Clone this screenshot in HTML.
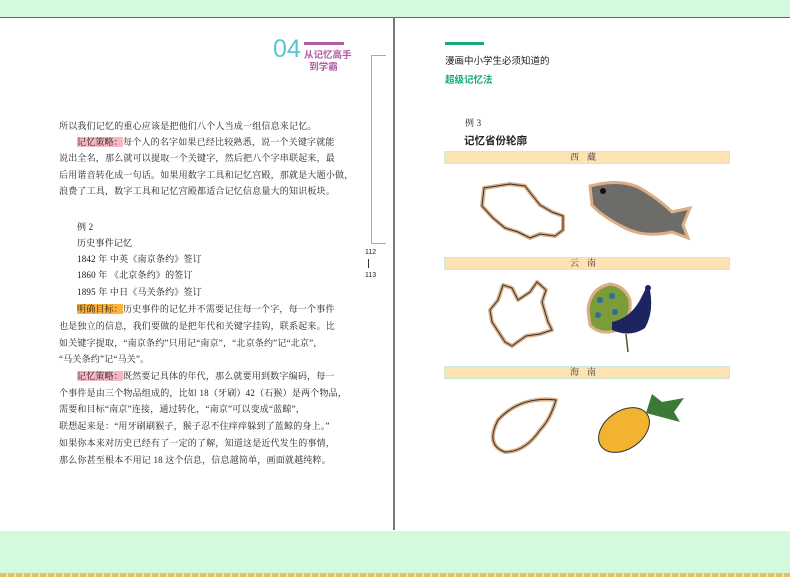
<!DOCTYPE html>
<html><head><meta charset="utf-8"><style>
body{margin:0;width:790px;height:577px;overflow:hidden;background:#d3fadd;position:relative;font-family:"Liberation Serif","Noto Serif CJK SC",serif;color:#222}
.a{position:absolute;white-space:nowrap}
.page{position:absolute;left:0;top:17px;width:790px;height:513px;background:#fff;border-top:1px solid #666}
.t{position:absolute;left:59px;font-size:9px;letter-spacing:0.2px;color:#222}
.hp{background:#f7b6c3}.hy{background:#fbb53e}
.bar{position:absolute;left:444px;width:284px;height:11px;background:#fde2b3;border:1px solid #cfe9d6;font-size:9px;text-align:center;line-height:11px;letter-spacing:8px;color:#444}
</style></head><body>
<div class="page"></div>
<div class="a" style="left:393px;top:17px;width:2px;height:513px;background:#777"></div>
<div class="a" style="left:0;top:573px;width:790px;height:4px;background:repeating-linear-gradient(90deg,#e6c060 0 6px,#f3dd9a 6px 8px)"></div>
<div class="a" style="left:273px;top:36px;font-family:'Liberation Sans',sans-serif;font-size:25px;color:#5bc3d3;line-height:26px">04</div>
<div class="a" style="left:304px;top:42px;width:40px;height:3px;background:#b35ba5"></div>
<div class="a" style="left:304px;top:50px;font-family:'Liberation Sans','Noto Sans CJK SC',sans-serif;font-size:9.5px;font-weight:bold;color:#b35ba5;line-height:12px">从记忆高手<br>&nbsp;&nbsp;到学霸</div>
<div class="a" style="left:371px;top:55px;width:14px;height:187px;border-left:1px solid #d58fc9;border-top:1px solid #d58fc9;border-bottom:1px solid #d58fc9"></div>
<div class="a" style="left:365px;top:249px;font-size:7px;font-family:'Liberation Sans',sans-serif">112</div>
<div class="a" style="left:368px;top:259px;width:1px;height:9px;background:#333"></div>
<div class="a" style="left:365px;top:272px;font-size:7px;font-family:'Liberation Sans',sans-serif">113</div>
<div class="a" style="left:445px;top:42px;width:39px;height:3px;background:#16a97a"></div>
<div class="a" style="left:445px;top:53px;font-family:'Liberation Sans','Noto Sans CJK SC',sans-serif;font-size:9.5px;color:#222">漫画中小学生必须知道的</div>
<div class="a" style="left:445px;top:72px;font-family:'Liberation Sans','Noto Sans CJK SC',sans-serif;font-size:9.5px;font-weight:bold;color:#16a97a">超级记忆法</div>
<div class="a t" style="top:119px">所以我们记忆的重心应该是把他们八个人当成一组信息来记忆。</div>
<div class="a t" style="top:135px;left:77px"><span class="hp">记忆策略：</span>每个人的名字如果已经比较熟悉，说一个关键字就能</div>
<div class="a t" style="top:151px">说出全名，那么就可以提取一个关键字，然后把八个字串联起来，最</div>
<div class="a t" style="top:168px">后用谐音转化成一句话。如果用数字工具和记忆宫殿，那就是大题小做，</div>
<div class="a t" style="top:184px">浪费了工具，数字工具和记忆宫殿都适合记忆信息量大的知识板块。</div>
<div class="a t" style="top:220px;left:77px">例 2</div>
<div class="a t" style="top:236px;left:77px;color:#111">历史事件记忆</div>
<div class="a t" style="top:252px;left:77px;color:#111">1842 年 中英《南京条约》签订</div>
<div class="a t" style="top:268px;left:77px;color:#111">1860 年 《北京条约》的签订</div>
<div class="a t" style="top:285px;left:77px;color:#111">1895 年 中日《马关条约》签订</div>
<div class="a t" style="top:302px;left:77px"><span class="hy">明确目标：</span>历史事件的记忆并不需要记住每一个字，每一个事件</div>
<div class="a t" style="top:319px">也是独立的信息，我们要做的是把年代和关键字挂钩，联系起来。比</div>
<div class="a t" style="top:336px">如关键字提取，“南京条约”只用记“南京”，“北京条约”记“北京”，</div>
<div class="a t" style="top:352px">“马关条约”记“马关”。</div>
<div class="a t" style="top:369px;left:77px"><span class="hp">记忆策略：</span>既然要记具体的年代，那么就要用到数字编码，每一</div>
<div class="a t" style="top:386px">个事件是由三个物品组成的，比如 18（牙刷）42（石猴）是两个物品，</div>
<div class="a t" style="top:402px">需要和目标“南京”连接，通过转化，“南京”可以变成“蓝鲸”，</div>
<div class="a t" style="top:419px">联想起来是：“用牙刷刷猴子，猴子忍不住痒痒躲到了蓝鲸的身上。”</div>
<div class="a t" style="top:436px">如果你本来对历史已经有了一定的了解，知道这是近代发生的事情，</div>
<div class="a t" style="top:453px">那么你甚至根本不用记 18 这个信息，信息越简单，画面就越纯粹。</div>
<div class="a t" style="left:465px;top:116px">例 3</div>
<div class="a" style="left:464px;top:133px;font-size:10.5px;font-weight:bold;font-family:'Liberation Sans','Noto Sans CJK SC',sans-serif">记忆省份轮廓</div>
<div class="bar" style="top:151px">西藏</div>
<div class="bar" style="top:257px">云南</div>
<div class="bar" style="top:366px">海南</div>
<svg class="a" style="left:0;top:0" width="790" height="577">
<g fill="#fff" stroke="#dcae85" stroke-width="4" stroke-linejoin="round">
<path d="M484 188 L510 184 L525 186 L532 195 L540 205 L552 212 L563 216 L563 230 L555 236 L540 234 L530 238 L518 232 L505 228 L493 218 L482 206 Z"/>
<path d="M503 285 L512 288 L518 300 L530 292 L537 282 L546 290 L542 302 L548 322 L552 330 L540 334 L526 336 L512 346 L505 342 L492 322 L490 310 L498 300 Z"/>
<path d="M498 420 Q520 396 556 400 Q550 420 540 430 Q525 452 505 452 Q485 445 498 420 Z"/>
</g>
<g fill="none" stroke="#333" stroke-width="1">
<path d="M484 188 L510 184 L525 186 L532 195 L540 205 L552 212 L563 216 L563 230 L555 236 L540 234 L530 238 L518 232 L505 228 L493 218 L482 206 Z"/>
<path d="M503 285 L512 288 L518 300 L530 292 L537 282 L546 290 L542 302 L548 322 L552 330 L540 334 L526 336 L512 346 L505 342 L492 322 L490 310 L498 300 Z"/>
<path d="M498 420 Q520 396 556 400 Q550 420 540 430 Q525 452 505 452 Q485 445 498 420 Z"/>
</g>
<path d="M590 186 Q620 178 640 188 Q660 200 672 212 L690 208 L683 225 L688 238 L672 232 Q645 238 625 228 Q600 215 592 205 Z" fill="#6e6c68" stroke="#dcae85" stroke-width="3"/>
<circle cx="603" cy="191" r="3" fill="#111"/>
<path d="M588 310 Q590 288 610 284 Q625 286 630 300 Q632 320 618 330 Q600 336 590 325 Z" fill="#7c9c3a" stroke="#dcae85" stroke-width="3"/>
<circle cx="600" cy="300" r="3" fill="#2a6fa0"/><circle cx="612" cy="296" r="3" fill="#2a6fa0"/><circle cx="598" cy="315" r="3" fill="#2a6fa0"/><circle cx="615" cy="312" r="3" fill="#2a6fa0"/>
<path d="M612 322 Q630 318 640 300 L646 288 L650 290 Q654 312 645 328 Q630 338 612 330 Z" fill="#1e2460"/>
<circle cx="648" cy="288" r="3" fill="#1e2460"/>
<line x1="626" y1="334" x2="628" y2="352" stroke="#553" stroke-width="1.5"/>
<ellipse cx="624" cy="430" rx="28" ry="19" transform="rotate(-35 624 430)" fill="#f2b330" stroke="#333" stroke-width="1"/>
<path d="M646 413 L652 394 L662 402 L684 398 L674 412 L680 422 Z" fill="#3a7a35"/>
</svg>
</body></html>
